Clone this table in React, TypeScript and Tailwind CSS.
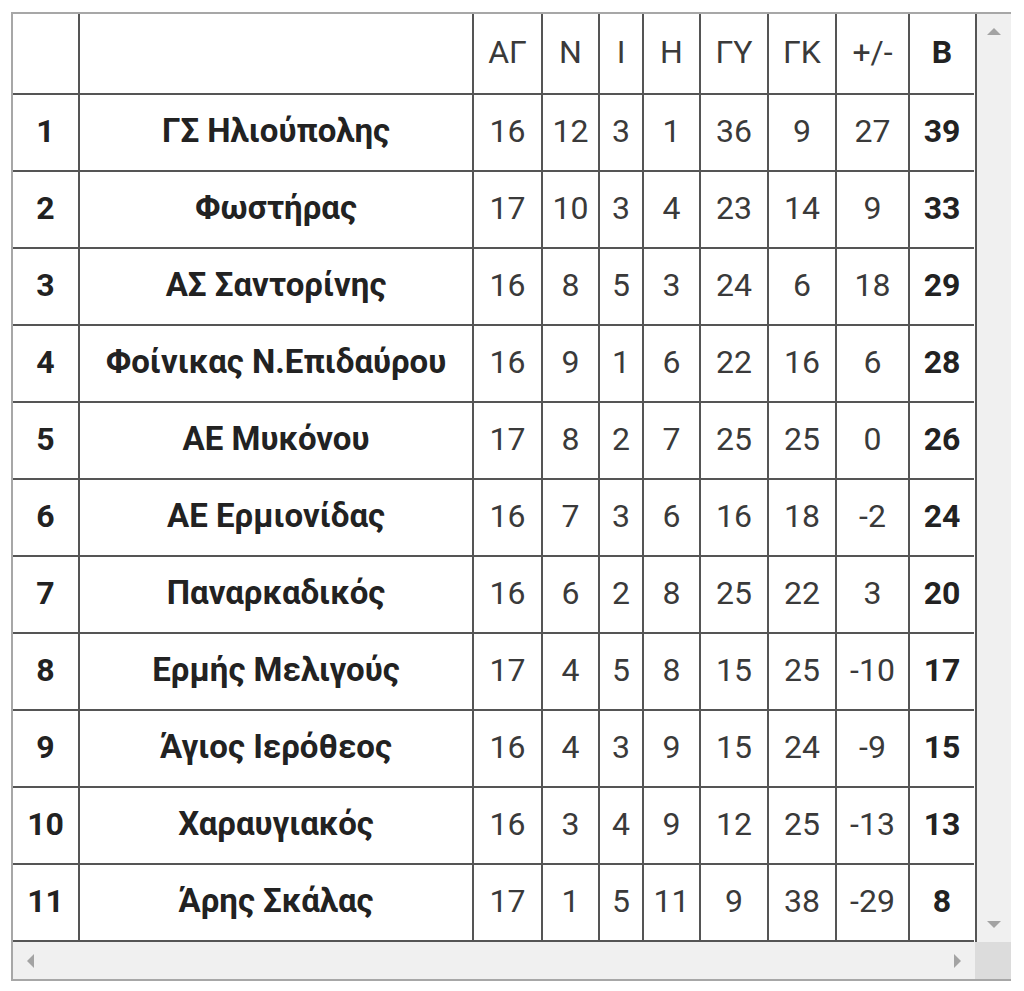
const rows = [
  [1, "ΓΣ Ηλιούπολης", 16, 12, 3, 1, 36, 9, 27, 39],
  [2, "Φωστήρας", 17, 10, 3, 4, 23, 14, 9, 33],
  [3, "ΑΣ Σαντορίνης", 16, 8, 5, 3, 24, 6, 18, 29],
  [4, "Φοίνικας Ν.Επιδαύρου", 16, 9, 1, 6, 22, 16, 6, 28],
  [5, "ΑΕ Μυκόνου", 17, 8, 2, 7, 25, 25, 0, 26],
  [6, "ΑΕ Ερμιονίδας", 16, 7, 3, 6, 16, 18, -2, 24],
  [7, "Παναρκαδικός", 16, 6, 2, 8, 25, 22, 3, 20],
  [8, "Ερμής Μελιγούς", 17, 4, 5, 8, 15, 25, -10, 17],
  [9, "Άγιος Ιερόθεος", 16, 4, 3, 9, 15, 24, -9, 15],
  [10, "Χαραυγιακός", 16, 3, 4, 9, 12, 25, -13, 13],
  [11, "Άρης Σκάλας", 17, 1, 5, 11, 9, 38, -29, 8],
];

const headers = ["ΑΓ", "Ν", "Ι", "Η", "ΓΥ", "ΓΚ", "+/-"];
const widths = [66, 394, 69, 57, 44, 57, 68, 68, 73, 65];

function App() {
  return (
    <div
      className="min-h-[991px] bg-white pl-[11px] pt-[12px]"
      style={{ fontFamily: "Roboto, 'Noto Sans', sans-serif" }}
    >
      <div className="grid w-[1000px] grid-cols-[962px_36px] grid-rows-[auto_37px] border-2 border-[#a7a7a7]">
        <div className="overflow-hidden">
          <table className="table-fixed border-collapse text-[32px] text-[#3a3a3a]">
            <colgroup>
              {widths.map((w, i) => (
                <col key={i} style={{ width: w }} />
              ))}
            </colgroup>
            <thead>
              <tr className="h-[80px]">
                <th className="border-2 border-t-0 border-l-0 border-[#555]"></th>
                <th className="border-2 border-t-0 border-[#555]"></th>
                {headers.map((h) => (
                  <th
                    key={h}
                    className="border-2 border-t-0 border-[#555] pb-[3px] text-center font-normal"
                  >
                    {h}
                  </th>
                ))}
                <th className="border-2 border-t-0 border-r-0 border-[#555] pb-[3px] text-center font-bold text-[#222]">
                  Β
                </th>
              </tr>
            </thead>
            <tbody>
              {rows.map((r) => (
                <tr key={r[0]} className="h-[77px]">
                  <td className="border-2 border-l-0 border-[#555] pb-[3px] text-center font-bold text-[#222]">
                    {r[0]}
                  </td>
                  <td className="border-2 border-[#555] pb-[3px] text-center text-[33px] font-bold text-[#222]">
                    {r[1]}
                  </td>
                  {r.slice(2, 9).map((v, i) => (
                    <td
                      key={i}
                      className="border-2 border-[#555] pb-[3px] text-center"
                    >
                      {v}
                    </td>
                  ))}
                  <td className="border-2 border-r-0 border-[#555] pb-[3px] text-center font-bold text-[#222]">
                    {r[9]}
                  </td>
                </tr>
              ))}
            </tbody>
          </table>
        </div>

        <div className="flex flex-col items-center justify-between border-l-2 border-[#555] bg-[#f0f0f0] py-[14px]">
          <div className="h-0 w-0 border-x-[7px] border-b-[7px] border-x-transparent border-b-[#a3a3a3]"></div>
          <div className="h-0 w-0 border-x-[7px] border-t-[7px] border-x-transparent border-t-[#a3a3a3]"></div>
        </div>

        <div className="flex items-center justify-between bg-[#f0f0f0] px-[14px]">
          <div className="h-0 w-0 border-y-[7px] border-r-[7px] border-y-transparent border-r-[#a3a3a3]"></div>
          <div className="h-0 w-0 border-y-[7px] border-l-[7px] border-y-transparent border-l-[#a3a3a3]"></div>
        </div>

        <div className="bg-[#dcdcdc]"></div>
      </div>
    </div>
  );
}

export default App;
